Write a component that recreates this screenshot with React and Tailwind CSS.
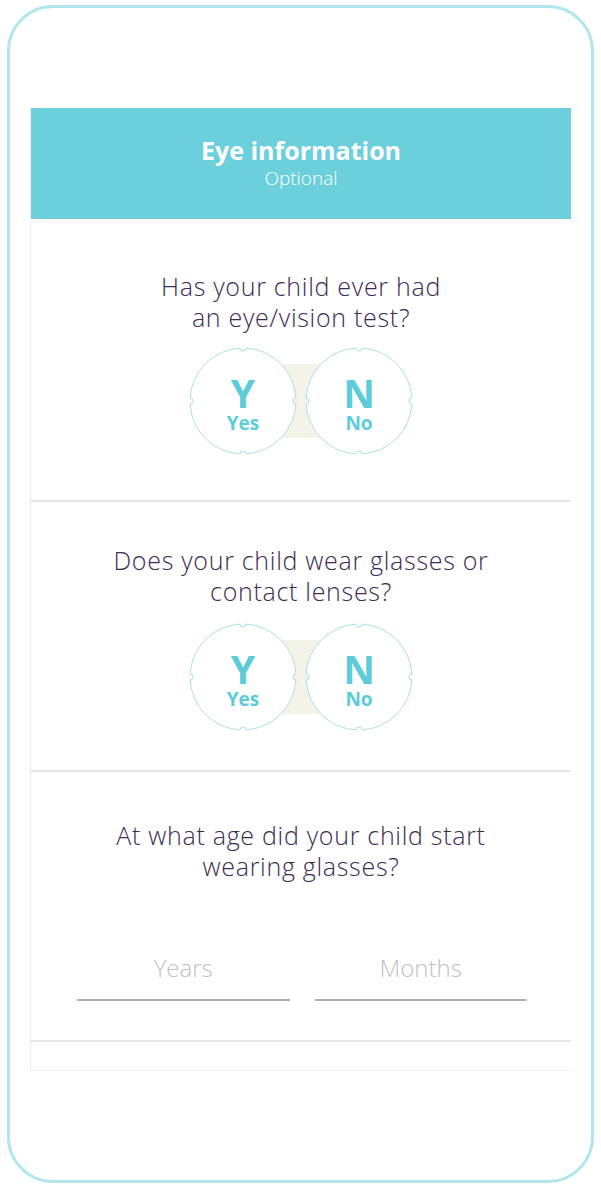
import React, { useState } from "react";

const R = 53;
const r = 3;

// circle with four small inward notches at top/right/bottom/left
function notchedCircle(cx, cy) {
  const h = Math.sqrt(R * R - r * r);
  const p = (x, y) => `${x.toFixed(2)} ${y.toFixed(2)}`;
  return [
    `M ${p(cx + r, cy - h)}`,
    `A ${R} ${R} 0 0 1 ${p(cx + h, cy - r)}`,
    `A ${r} ${r} 0 0 0 ${p(cx + h, cy + r)}`,
    `A ${R} ${R} 0 0 1 ${p(cx + r, cy + h)}`,
    `A ${r} ${r} 0 0 0 ${p(cx - r, cy + h)}`,
    `A ${R} ${R} 0 0 1 ${p(cx - h, cy + r)}`,
    `A ${r} ${r} 0 0 0 ${p(cx - h, cy - r)}`,
    `A ${R} ${R} 0 0 1 ${p(cx - r, cy - h)}`,
    `A ${r} ${r} 0 0 0 ${p(cx + r, cy - h)}`,
    "Z",
  ].join(" ");
}

function YesNo({ value, onChange }) {
  return (
    <div className="relative w-[226px] h-[110px]">
      <svg
        className="absolute inset-0"
        width="226"
        height="110"
        viewBox="0 0 226 110"
      >
        <rect x="55" y="18" width="116" height="74" fill="#f4f3e8" />
        <path
          d={notchedCircle(55, 55)}
          fill={value === "yes" ? "#eefafb" : "#ffffff"}
          stroke="#a9e1e7"
          strokeWidth="1"
        />
        <path
          d={notchedCircle(171, 55)}
          fill={value === "no" ? "#eefafb" : "#ffffff"}
          stroke="#a9e1e7"
          strokeWidth="1"
        />
      </svg>
      <div className="relative flex justify-between h-full">
        <button
          type="button"
          onClick={() => onChange("yes")}
          className="w-[110px] h-full flex flex-col items-center pt-[27px] text-[#5ccdd8] font-bold"
        >
          <span className="text-[39px] leading-[39px]">Y</span>
          <span className="text-[19px] leading-[22px]">Yes</span>
        </button>
        <button
          type="button"
          onClick={() => onChange("no")}
          className="w-[110px] h-full flex flex-col items-center pt-[27px] text-[#5ccdd8] font-bold"
        >
          <span className="text-[39px] leading-[39px]">N</span>
          <span className="text-[19px] leading-[22px]">No</span>
        </button>
      </div>
    </div>
  );
}

export default function App() {
  const [test, setTest] = useState(null);
  const [glasses, setGlasses] = useState(null);
  const [years, setYears] = useState("");
  const [months, setMonths] = useState("");

  return (
    <div
      className="w-[601px] h-[1189px] bg-white pt-[5px] px-[7px] overflow-hidden"
      style={{ fontFamily: "'Open Sans', Lato, sans-serif" }}
    >
      <div className="h-[1178px] border-[3px] border-[#b2e6ed] rounded-[46px] pt-[100px] pl-[20px] pr-[20px]">
        <div className="border-l border-[#ececec] bg-white">
          <header className="h-[111px] bg-[#6bd0db] flex flex-col items-center justify-center text-white">
            <h1 className="text-[25px] leading-[28px] font-bold">
              Eye information
            </h1>
            <p className="text-[19px] leading-[28px] font-light">Optional</p>
          </header>

          <section className="h-[283px] border-b-2 border-[#e6e6e6] flex flex-col items-center pt-[52px]">
            <h2 className="text-[25px] leading-[31px] font-light tracking-[0.7px] text-[#3d2b52] text-center">
              Has your child ever had
              <br />
              an eye/vision test?
            </h2>
            <div className="mt-[13px]">
              <YesNo value={test} onChange={setTest} />
            </div>
          </section>

          <section className="h-[270px] border-b-2 border-[#e6e6e6] flex flex-col items-center pt-[43px]">
            <h2 className="text-[25px] leading-[31px] font-light tracking-[0.7px] text-[#3d2b52] text-center">
              Does your child wear glasses or
              <br />
              contact lenses?
            </h2>
            <div className="mt-[15px]">
              <YesNo value={glasses} onChange={setGlasses} />
            </div>
          </section>

          <section className="h-[270px] border-b-2 border-[#e6e6e6] flex flex-col items-center pt-[48px]">
            <h2 className="text-[25px] leading-[31px] font-light tracking-[0.7px] text-[#3d2b52] text-center">
              At what age did your child start
              <br />
              wearing glasses?
            </h2>
            <div className="w-full flex gap-[25px] pl-[46px] pr-[44px] mt-[67px]">
              <input
                value={years}
                onChange={(e) => setYears(e.target.value)}
                placeholder="Years"
                className="flex-1 min-w-0 h-[52px] pb-[14px] border-b-2 border-[#b4acc2] text-center text-[24px] font-light text-[#3d2b52] placeholder:text-[#c2c2c2] outline-none"
              />
              <input
                value={months}
                onChange={(e) => setMonths(e.target.value)}
                placeholder="Months"
                className="flex-1 min-w-0 h-[52px] pb-[14px] border-b-2 border-[#b4acc2] text-center text-[24px] font-light text-[#3d2b52] placeholder:text-[#c2c2c2] outline-none"
              />
            </div>
          </section>

          <div className="h-[29px] border-b border-[#f1f1f1]" />
        </div>
      </div>
    </div>
  );
}
